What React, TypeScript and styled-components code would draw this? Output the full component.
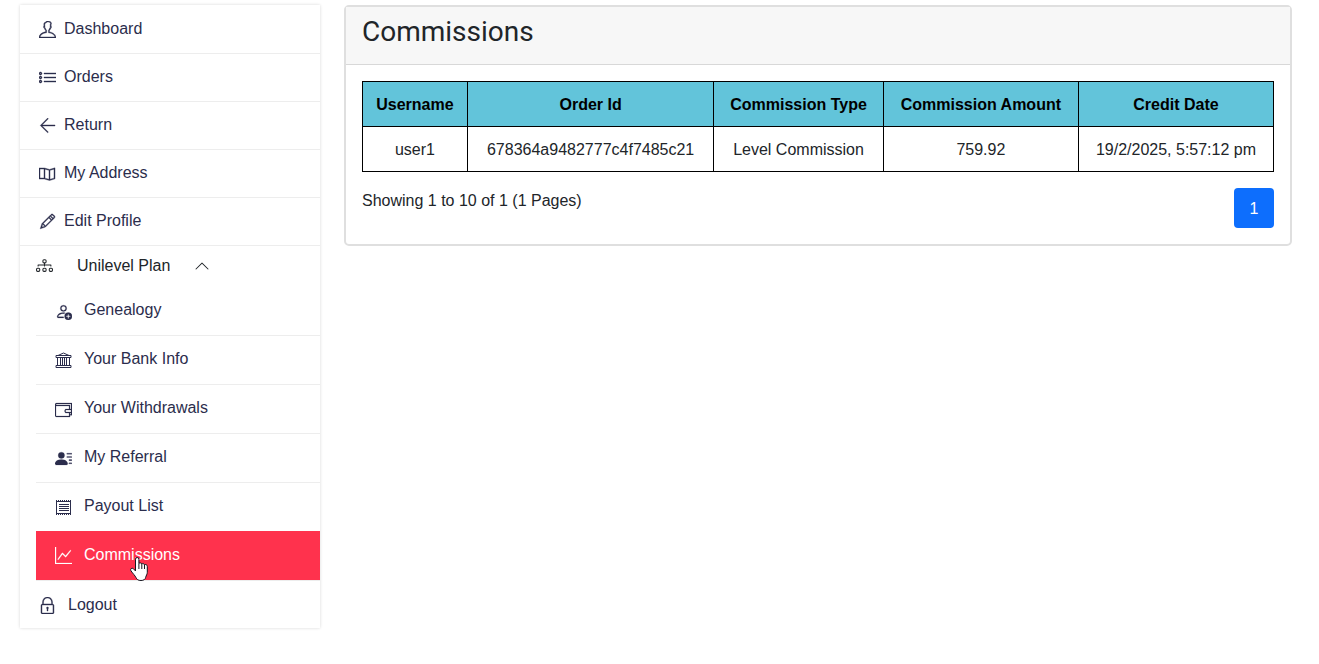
import React from "react";
import styled, { createGlobalStyle, css } from "styled-components";
import { BsChevronUp, BsDiagram3, BsGraphUp, BsPersonAdd, BsPersonLinesFill } from "react-icons/bs";
import { TfiArrowLeft, TfiList, TfiLock, TfiMap, TfiPencil, TfiUser, TfiWallet } from "react-icons/tfi";

const GlobalStyle = createGlobalStyle`
  *, *::before, *::after { box-sizing: border-box; }
  body {
    margin: 0;
    background: #fff;
    color: #212529;
    font-family: "Liberation Sans", Arial, sans-serif;
    font-size: 16px;
    line-height: 26px;
  }
`;

const Page = styled.div`
  display: grid;
  grid-template-columns: repeat(12, minmax(0, 1fr));
  column-gap: 24px;
  align-items: start;
  padding: 5px 27px 32px 20px;
`;

const Sidebar = styled.nav`
  grid-column: span 3;
  padding-top: 1px;
  background: #fff;
  box-shadow: 0 0 3px rgba(0, 0, 0, 0.16);
`;

const Menu = styled.ul`
  list-style: none;
  margin: 0;
  padding: 0;
`;

const SubMenu = styled(Menu)`
  padding-left: 16px;
`;

const MenuItem = styled.li`
  position: relative;
`;

const menuEntry = css`
  display: flex;
  align-items: center;
  width: 100%;
  color: #2b2d4c;
  text-decoration: none;
  svg { flex: none; }
`;

const MenuLink = styled.a<{ $last?: boolean }>`
  ${menuEntry}
  gap: ${(p) => (p.$last ? 12 : 8)}px;
  height: ${(p) => (p.$last ? 47 : 48)}px;
  padding: 0 19px ${(p) => (p.$last ? 0 : 2)}px;
  border-bottom: ${(p) => (p.$last ? "none" : "1px solid #ededed")};
  svg { margin-top: 2px; stroke-width: 0.4px; }
`;

const SubLink = styled.a<{ $active?: boolean }>`
  ${menuEntry}
  gap: 12px;
  height: 49px;
  padding: 0 19px 2px;
  border-bottom: 1px solid #ededed;
  svg { margin-top: 2px; stroke-width: 0.2px; }
  ${(p) => p.$active && css`
    height: 50px;
    margin-top: -1px;
    background: #ff324d;
    background-clip: padding-box;
    color: #fff;
  `}
`;

const GroupToggle = styled.button`
  ${menuEntry}
  height: 41px;
  padding: 0 16px 2px;
  border: 0;
  background: none;
  color: #212529;
  font: inherit;
`;

const GroupLabel = styled.span`
  margin: 0 24px;
`;

const Pointer = styled.svg`
  position: absolute;
  left: 94px;
  top: 26px;
  pointer-events: none;
`;

const Card = styled.main`
  grid-column: span 9;
  border: 2px solid #dfdfdf;
  border-radius: 5px;
`;

const CardHeader = styled.header`
  padding: 8px 16px 16px;
  background: #f7f7f7;
  border-bottom: 1px solid #d8d8d8;
`;

const Title = styled.h1`
  margin: 0;
  font-family: Roboto, sans-serif;
  font-size: 28px;
  font-weight: 400;
  line-height: 33px;
`;

const CardBody = styled.div`
  padding: 16px;
`;

const Table = styled.table`
  width: 100%;
  border-collapse: collapse;
  text-align: center;
  th, td {
    padding: 10px 9px 8px;
    border: 1px solid #000;
  }
  th {
    background: #62c4da;
    color: #000;
  }
`;

const TableFooter = styled.div`
  display: flex;
  justify-content: space-between;
  align-items: flex-start;
  margin-top: 16px;
`;

const PageButton = styled.button`
  width: 40px;
  height: 40px;
  padding: 2px 0 0;
  border: 0;
  border-radius: 4px;
  background: #0d6efd;
  color: #fff;
  font: inherit;
`;

type IconProps = { size?: number; "aria-hidden"?: boolean };
type Entry = { label: string; icon: React.ComponentType<IconProps>; active?: boolean };

const BankIcon = ({ size = 17 }: IconProps) => (
  <svg width={size} height={size} viewBox="0 0 17 17" aria-hidden="true">
    <g fill="none" stroke="currentColor" strokeWidth="1">
      <path d="M3 3.500 8.500 1 14 3.500" />
      <path d="M1 3.500h15v2H1z" />
      <path d="M2.500 5.500v8M5.500 5.500v8M7.500 5.500v8M9.500 5.500v8M11.500 5.500v8M14.500 5.500v8" />
      <path d="M1 13.500h15v2H1z" />
    </g>
  </svg>
);

const ReceiptIcon = ({ size = 17 }: IconProps) => (
  <svg width={size} height={size} viewBox="0 0 17 17" aria-hidden="true">
    <g fill="none" stroke="currentColor" strokeWidth="1">
      <path d="M1.500 1.500v14M15.500 1.500v14" />
      <path d="M1 2.500h15M1 14.500h15" />
      <path d="M1 1.500h15M1 15.500h15" strokeDasharray="1 1" />
      <path d="M4 5.500h10M4 7.500h10M4 9.500h10M4 11.500h10" />
    </g>
  </svg>
);

const mainLinks: Entry[] = [
  { label: "Dashboard", icon: TfiUser },
  { label: "Orders", icon: TfiList },
  { label: "Return", icon: TfiArrowLeft },
  { label: "My Address", icon: TfiMap },
  { label: "Edit Profile", icon: TfiPencil },
];

const planLinks: Entry[] = [
  { label: "Genealogy", icon: BsPersonAdd },
  { label: "Your Bank Info", icon: BankIcon },
  { label: "Your Withdrawals", icon: TfiWallet },
  { label: "My Referral", icon: BsPersonLinesFill },
  { label: "Payout List", icon: ReceiptIcon },
  { label: "Commissions", icon: BsGraphUp, active: true },
];

const columns = ["Username", "Order Id", "Commission Type", "Commission Amount", "Credit Date"];
const rows = [["user1", "678364a9482777c4f7485c21", "Level Commission", "759.92", "19/2/2025, 5:57:12 pm"]];

const HandPointer = () => (
  <Pointer width="18" height="24" viewBox="0 0 18 24" aria-hidden="true">
    <path
      d="M5.500 14V2.200a1.700 1.700 0 0 1 3.400 0V6.500c.4-.9 2.600-.8 2.900.5.500-.8 2.500-.5 2.700.8.700-.7 2.800-.3 2.800 1.500v6c0 2-1.200 3.200-1.600 5-.3 2-2 3.200-4.700 3.200-2.900 0-4.100-1-5-2.900C5 18.500 3.200 17 .9 13.700c-1-1.700.9-3.300 2.500-2z"
      fill="#fff"
      stroke="#15151f"
      strokeLinejoin="round"
    />
    <path d="M8.900 6.500V12M11.800 7v5M14.500 7.800V12" fill="none" stroke="#15151f" />
  </Pointer>
);

export default function App() {
  return (
    <>
      <GlobalStyle />
      <Page>
        <Sidebar aria-label="Account">
          <Menu>
            {mainLinks.map(({ label, icon: Icon }) => (
              <MenuItem key={label}>
                <MenuLink href="#"><Icon size={17} aria-hidden />{label}</MenuLink>
              </MenuItem>
            ))}
            <MenuItem>
              <GroupToggle type="button" aria-expanded="true">
                <BsDiagram3 size={17} aria-hidden />
                <GroupLabel>Unilevel Plan</GroupLabel>
                <BsChevronUp size={16} aria-hidden />
              </GroupToggle>
              <SubMenu>
                {planLinks.map(({ label, icon: Icon, active }) => (
                  <MenuItem key={label}>
                    <SubLink href="#" $active={active} aria-current={active ? "page" : undefined}>
                      <Icon size={17} aria-hidden />{label}
                    </SubLink>
                    {active && <HandPointer />}
                  </MenuItem>
                ))}
              </SubMenu>
            </MenuItem>
            <MenuItem>
              <MenuLink href="#" $last><TfiLock size={17} aria-hidden />Logout</MenuLink>
            </MenuItem>
          </Menu>
        </Sidebar>
        <Card>
          <CardHeader><Title>Commissions</Title></CardHeader>
          <CardBody>
            <Table>
              <thead>
                <tr>{columns.map((c) => <th key={c} scope="col">{c}</th>)}</tr>
              </thead>
              <tbody>
                {rows.map((r) => (
                  <tr key={r[1]}>{r.map((v) => <td key={v}>{v}</td>)}</tr>
                ))}
              </tbody>
            </Table>
            <TableFooter>
              <span>Showing 1 to 10 of 1 (1 Pages)</span>
              <PageButton type="button" aria-current="page">1</PageButton>
            </TableFooter>
          </CardBody>
        </Card>
      </Page>
    </>
  );
}
